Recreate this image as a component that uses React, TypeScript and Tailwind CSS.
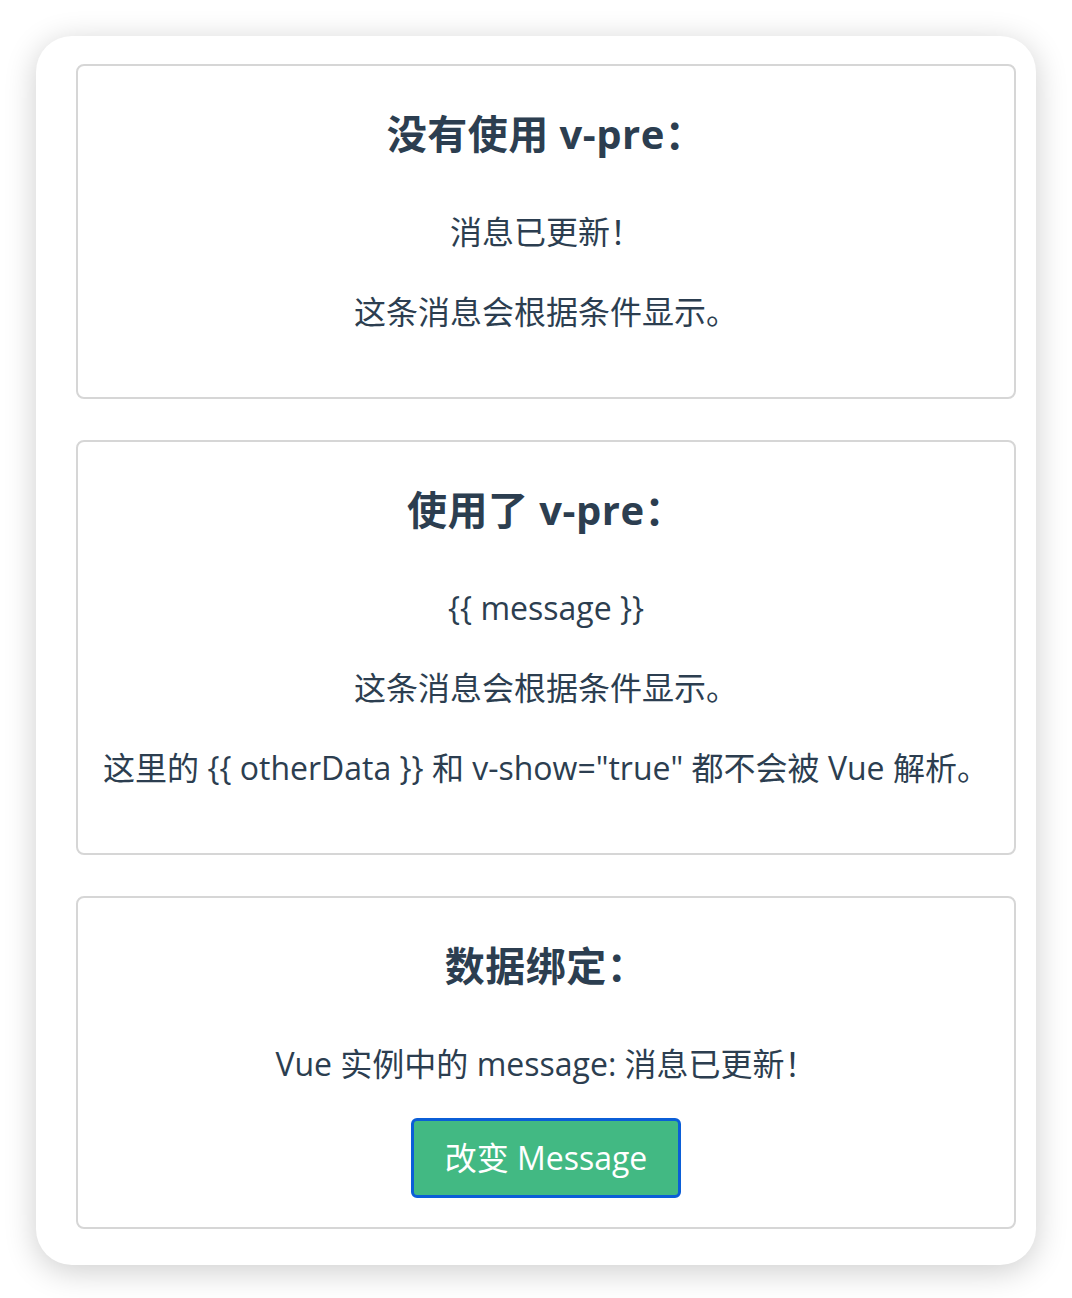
export default function App() {
  const font = { fontFamily: '"Open Sans", "Noto Sans CJK SC", sans-serif' };
  return (
    <div className="min-h-screen bg-white pt-[36px] px-[36px] pb-[36px]" style={font}>
      <div className="w-[1000px] rounded-[36px] bg-white pl-[40px] pr-[20px] pt-[28px] pb-[36px] shadow-[0_6px_32px_rgba(0,0,0,0.2)] text-[#2c3e50] flex flex-col gap-[41px]">
        {/* 没有使用 v-pre */}
        <section className="rounded-[8px] border-2 border-[#d6d6d6] pt-[44px] pb-[63px] text-center">
          <h2 className="text-[40px] leading-[48px] font-bold tracking-[0.5px]">没有使用 v-pre：</h2>
          <p className="mt-[51px] text-[32px] leading-[45px]">消息已更新！</p>
          <p className="mt-[35px] text-[32px] leading-[45px]">这条消息会根据条件显示。</p>
        </section>

        {/* 使用了 v-pre */}
        <section className="rounded-[8px] border-2 border-[#d6d6d6] pt-[44px] pb-[63px] text-center">
          <h2 className="text-[40px] leading-[48px] font-bold tracking-[0.5px]">使用了 v-pre：</h2>
          <p className="mt-[51px] text-[32px] leading-[45px]">{"{{ message }}"}</p>
          <p className="mt-[35px] text-[32px] leading-[45px]">这条消息会根据条件显示。</p>
          <p className="mt-[35px] text-[32px] leading-[45px]">
            这里的 {"{{ otherData }}"} 和 v-show="true" 都不会被 Vue 解析。
          </p>
        </section>

        {/* 数据绑定 */}
        <section className="rounded-[8px] border-2 border-[#d6d6d6] pt-[44px] pb-[29px] text-center flex flex-col items-center">
          <h2 className="text-[40px] leading-[48px] font-bold tracking-[0.5px]">数据绑定：</h2>
          <p className="mt-[51px] text-[32px] leading-[45px]">Vue 实例中的 message: 消息已更新！</p>
          <button className="mt-[32px] w-[270px] h-[80px] rounded-[6px] border-[3px] border-[#0b5ed7] bg-[#42b983] text-white text-[32px]">
            改变 Message
          </button>
        </section>
      </div>
    </div>
  );
}
